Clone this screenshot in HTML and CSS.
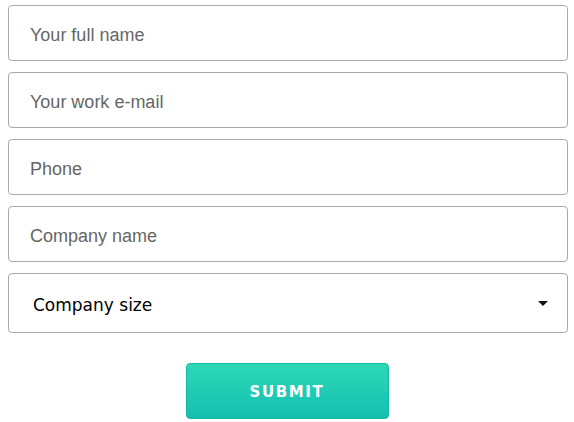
FILE: index.html
```html
<!DOCTYPE html>
<html>
  <head>
    <meta charset="UTF-8" />
    <title>Contact form</title>
    <link rel="stylesheet" href="styles.css">
  </head>
  <body>
    <form class="lead-form">
      <input class="field" type="text" placeholder="Your full name" />
      <input class="field" type="email" placeholder="Your work e-mail" />
      <input class="field" type="tel" placeholder="Phone" />
      <input class="field" type="text" placeholder="Company name" />

      <div class="select-wrap">
        <select class="field select">
          <option>Company size</option>
          <option>1-10</option>
          <option>11-50</option>
          <option>51-200</option>
          <option>200+</option>
        </select>
        <span class="caret"></span>
      </div>

      <div class="actions">
        <button type="submit" class="submit-btn">Submit</button>
      </div>
    </form>
  </body>
</html>
```

FILE: styles.css
```css
body {
  margin: 5px 6px 0 8px;
  font-family: "Liberation Sans", Arial, sans-serif;
  background: #fff;
}
.lead-form {
  display: flex;
  flex-direction: column;
  gap: 11px;
}
.field {
  box-sizing: border-box;
  width: 100%;
  height: 56px;
  padding: 4px 21px 0;
  border: 1px solid #a9a9a9;
  border-radius: 4px;
  font-family: "Liberation Sans", Arial, sans-serif;
  font-size: 18px;
  color: #222;
  background: #fff;
  outline: none;
}
.field::placeholder {
  color: #666;
}
.select-wrap {
  position: relative;
}
.select {
  height: 60px;
  padding: 4px 21px 0 24px;
  appearance: none;
  -webkit-appearance: none;
  font-family: "DejaVu Sans", sans-serif;
  font-size: 17px;
  color: #000;
}
.caret {
  position: absolute;
  right: 20px;
  top: 28px;
  width: 0;
  height: 0;
  border-left: 5px solid transparent;
  border-right: 5px solid transparent;
  border-top: 5px solid #111;
  pointer-events: none;
}
.actions {
  display: flex;
  justify-content: center;
  padding-top: 19px;
}
.submit-btn {
  width: 203px;
  height: 56px;
  margin-right: 2px;
  padding-top: 2px;
  border: 1px solid #13b9a4;
  border-radius: 4px;
  background: linear-gradient(#2dd8b6, #14bfb1);
  color: #fff;
  font-family: "DejaVu Sans", sans-serif;
  font-weight: bold;
  font-size: 15px;
  letter-spacing: 1.6px;
  text-transform: uppercase;
  cursor: pointer;
}
```
